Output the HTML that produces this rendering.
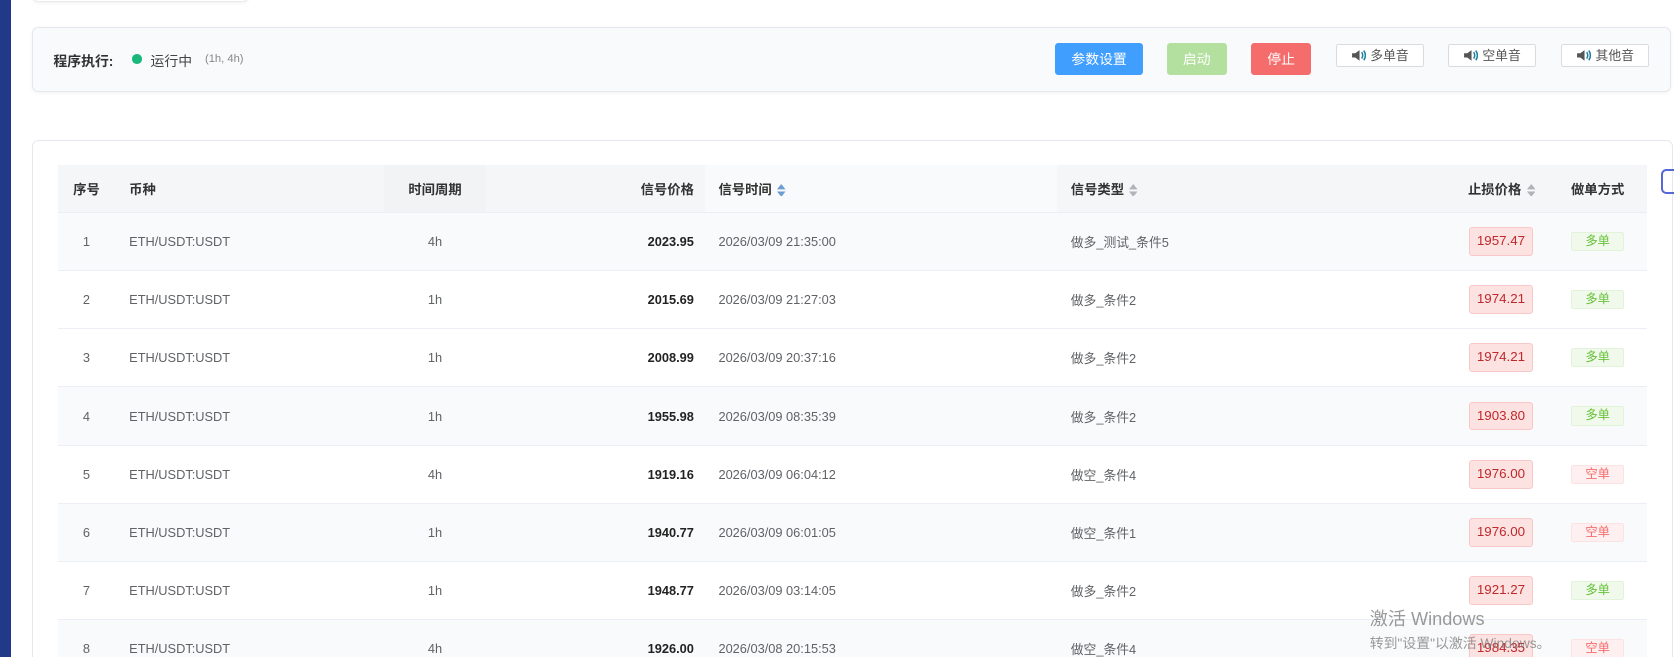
<!DOCTYPE html>
<html><head><meta charset="utf-8"><style>
*{box-sizing:border-box;margin:0;padding:0}
html,body{width:1674px;height:657px;overflow:hidden;background:#fff;font-family:"Liberation Sans","Noto Sans CJK SC",sans-serif;color:#606266}
#w{zoom:1.0676;width:1568px;height:616px;position:relative}
.a{position:absolute}
.bar{left:0;top:0;width:10px;height:616px;background:#203a88}
.top{left:30px;top:-10px;width:203px;height:12px;border:1px solid #e8eaee;border-radius:6px;box-shadow:0 1px 3px rgba(0,0,0,.06)}
.st{left:30px;top:25px;width:1535px;height:61px;background:#f9fafc;border:1px solid #e4e7ed;border-radius:6px;box-shadow:0 1px 4px rgba(0,0,0,.05)}
.btn{position:absolute;color:#fff;font-size:13px;text-align:center;border-radius:3px;top:40px;height:30px;line-height:30px}
.sb{position:absolute;top:41px;height:22px;line-height:20px;width:83px;background:#fff;border:1px solid #d8dbe0;border-radius:2px;font-size:12px;color:#555;text-align:center}
.spk{display:inline-block;vertical-align:-2px;margin-right:4px}
.card{left:30px;top:131px;width:1537px;height:500px;border:1px solid #e4e7ed;border-radius:6px}
table{position:absolute;left:54px;top:155px;width:1489px;border-collapse:collapse;font-size:12px;table-layout:fixed}
th{height:44px;background:#f4f6f8;color:#333;font-weight:bold;font-size:12.5px;border-bottom:1px solid #ebeef5}
td{height:54.5px;border-bottom:1px solid #ebeef5;color:#606266;white-space:nowrap}
tr.g td{background:#f9fafb}
.c{text-align:center}.r{text-align:right}.l{text-align:left}
.b{color:#222;font-weight:bold}
.sort{display:inline-block;width:8px;height:12px;vertical-align:-2px;margin-left:5px}
.sp{display:inline-block;width:60px;height:27px;line-height:25px;text-align:center;background:#fde2e2;border:1px solid #f8c7c7;border-radius:3px;color:#c0282a;font-size:12.5px}
.tg{display:inline-block;width:50px;height:18px;line-height:16px;font-size:11.5px;border-radius:2px;text-align:center}
.lo{background:#f0f9eb;border:1px solid #e1f3d8;color:#67c23a}
.sh{background:#fef0f0;border:1px solid #fde2e2;color:#f56c6c}
td:nth-child(2),th:nth-child(2){padding-left:13px}
td:nth-child(4),th:nth-child(4){padding-right:10px;text-align:right}
td:nth-child(5),th:nth-child(5),td:nth-child(6),th:nth-child(6){padding-left:13px}
td:nth-child(7){padding-right:14px;text-align:right}
th:nth-child(7){padding-right:12px;text-align:right}
</style></head><body><div id="w">
<div class="a bar"></div>
<div class="a top"></div>
<div class="a st"></div>
<div class="a" style="left:50px;top:47px;font-size:13px;font-weight:bold;color:#303133">程序执行:</div>
<div class="a" style="left:124px;top:51px;width:9px;height:9px;border-radius:50%;background:#19b77a"></div>
<div class="a" style="left:141px;top:47px;font-size:13px;color:#444">运行中</div>
<div class="a" style="left:192px;top:50px;font-size:10.5px;color:#888">(1h, 4h)</div>
<div class="btn" style="left:988px;width:83px;background:#409eff">参数设置</div>
<div class="btn" style="left:1093px;width:56px;background:#b3e09f">启动</div>
<div class="btn" style="left:1172px;width:56px;background:#f46c6c">停止</div>
<div class="sb" style="left:1251px"><svg class="spk" width="14" height="12" viewBox="0 0 14 12"><path d="M1 4h3l4-3v10L4 8H1z" fill="#555"/><path d="M10 3q2 3 0 6M12 1.5q3 4.5 0 9" stroke="#1a7fa0" fill="none" stroke-width="1.4"/></svg>多单音</div>
<div class="sb" style="left:1356px"><svg class="spk" width="14" height="12" viewBox="0 0 14 12"><path d="M1 4h3l4-3v10L4 8H1z" fill="#555"/><path d="M10 3q2 3 0 6M12 1.5q3 4.5 0 9" stroke="#1a7fa0" fill="none" stroke-width="1.4"/></svg>空单音</div>
<div class="sb" style="left:1462px"><svg class="spk" width="14" height="12" viewBox="0 0 14 12"><path d="M1 4h3l4-3v10L4 8H1z" fill="#555"/><path d="M10 3q2 3 0 6M12 1.5q3 4.5 0 9" stroke="#1a7fa0" fill="none" stroke-width="1.4"/></svg>其他音</div>
<div class="a card"></div>
<div class="a" style="left:1556px;top:158px;width:14px;height:24px;border:2px solid #5468d8;border-right:none;border-radius:5px 0 0 5px"></div>
<table>
<colgroup><col style="width:54px"><col style="width:252px"><col style="width:95px"><col style="width:205px"><col style="width:330px"><col style="width:250px"><col style="width:210px"><col style="width:93px"></colgroup>
<tr><th class="c">序号</th><th class="l">币种</th><th class="c" style="background:#f1f3f5">时间周期</th><th>信号价格</th><th class="l" style="background:#f9fafb">信号时间<svg class="sort" viewBox="0 0 8 12"><path d="M4 0L8 5H0z" fill="#6c9ed4"/><path d="M4 12L8 7H0z" fill="#6c9ed4"/></svg></th><th class="l">信号类型<svg class="sort" viewBox="0 0 8 12"><path d="M4 0L8 5H0zM4 12L8 7H0z" fill="#b0b3b8"/></svg></th><th>止损价格<svg class="sort" viewBox="0 0 8 12"><path d="M4 0L8 5H0zM4 12L8 7H0z" fill="#b0b3b8"/></svg></th><th class="c">做单方式</th></tr>
<tr class="g"><td class="c">1</td><td>ETH/USDT:USDT</td><td class="c">4h</td><td class="b">2023.95</td><td>2026/03/09 21:35:00</td><td>做多_测试_条件5</td><td><span class="sp">1957.47</span></td><td class="c"><span class="tg lo">多单</span></td></tr>
<tr><td class="c">2</td><td>ETH/USDT:USDT</td><td class="c">1h</td><td class="b">2015.69</td><td>2026/03/09 21:27:03</td><td>做多_条件2</td><td><span class="sp">1974.21</span></td><td class="c"><span class="tg lo">多单</span></td></tr>
<tr><td class="c">3</td><td>ETH/USDT:USDT</td><td class="c">1h</td><td class="b">2008.99</td><td>2026/03/09 20:37:16</td><td>做多_条件2</td><td><span class="sp">1974.21</span></td><td class="c"><span class="tg lo">多单</span></td></tr>
<tr class="g"><td class="c">4</td><td>ETH/USDT:USDT</td><td class="c">1h</td><td class="b">1955.98</td><td>2026/03/09 08:35:39</td><td>做多_条件2</td><td><span class="sp">1903.80</span></td><td class="c"><span class="tg lo">多单</span></td></tr>
<tr><td class="c">5</td><td>ETH/USDT:USDT</td><td class="c">4h</td><td class="b">1919.16</td><td>2026/03/09 06:04:12</td><td>做空_条件4</td><td><span class="sp">1976.00</span></td><td class="c"><span class="tg sh">空单</span></td></tr>
<tr class="g"><td class="c">6</td><td>ETH/USDT:USDT</td><td class="c">1h</td><td class="b">1940.77</td><td>2026/03/09 06:01:05</td><td>做空_条件1</td><td><span class="sp">1976.00</span></td><td class="c"><span class="tg sh">空单</span></td></tr>
<tr><td class="c">7</td><td>ETH/USDT:USDT</td><td class="c">1h</td><td class="b">1948.77</td><td>2026/03/09 03:14:05</td><td>做多_条件2</td><td><span class="sp">1921.27</span></td><td class="c"><span class="tg lo">多单</span></td></tr>
<tr class="g"><td class="c">8</td><td>ETH/USDT:USDT</td><td class="c">4h</td><td class="b">1926.00</td><td>2026/03/08 20:15:53</td><td>做空_条件4</td><td><span class="sp">1984.35</span></td><td class="c"><span class="tg sh">空单</span></td></tr>
</table>
<div class="a" style="left:1283px;top:567px;font-size:17px;color:rgba(120,120,120,.75)">激活 Windows</div>
<div class="a" style="left:1283px;top:592px;font-size:13px;color:rgba(120,120,120,.75)">转到"设置"以激活 Windows。</div>
</div></body></html>
